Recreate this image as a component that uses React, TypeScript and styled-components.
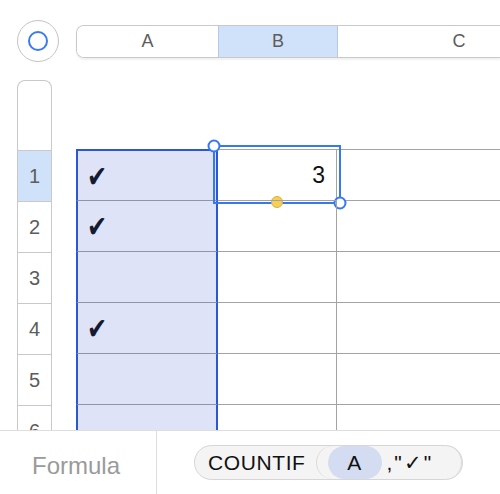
import React from "react"
import styled, { createGlobalStyle } from "styled-components"

const GlobalStyle = createGlobalStyle`
    html, body {
        margin: 0;
        padding: 0;
        background: #fff;
    }
    body {
        font-family: "Liberation Sans", Arial, sans-serif;
    }
`

const theme = {
    line: "#c9c9c9",
    grid: "#a3a3a3",
    gridSelected: "#8e94aa",
    headerText: "#5c5c5c",
    selectFill: "#dfe3f7",
    selectBorder: "#2b57d7",
    cellBorder: "#3479f2",
    headerSelected: "#d0e2f9",
}

const Page = styled.div`
    width: 500px;
    height: 494px;
    display: flex;
    flex-direction: column;
    overflow: hidden;
`

const Sheet = styled.div`
    height: 430px;
    flex-shrink: 0;
    overflow: hidden;
    display: flex;
    flex-direction: column;
`

const TopRow = styled.div`
    display: flex;
    align-items: center;
    padding: 20px 0 0 17px;
    gap: 17px;
`

const SelectAll = styled.div`
    width: 42px;
    height: 42px;
    box-sizing: border-box;
    border-radius: 50%;
    border: 1px solid #c4c4c4;
    display: flex;
    align-items: center;
    justify-content: center;
    flex-shrink: 0;
`

const SelectRing = styled.div`
    width: 16px;
    height: 16px;
    border-radius: 50%;
    border: 2px solid #3a7bf0;
`

const ColumnBar = styled.div`
    flex: 1;
    height: 33px;
    box-sizing: border-box;
    display: flex;
    border: 1px solid ${theme.line};
    border-right: none;
    border-radius: 8px 0 0 8px;
    overflow: hidden;
    box-shadow: 0 2px 2px rgba(0, 0, 0, 0.06);
`

const ColumnHead = styled.div<{ $w: number; $active?: boolean }>`
    width: ${(p) => p.$w}px;
    flex-shrink: 0;
    box-sizing: border-box;
    display: flex;
    align-items: center;
    justify-content: center;
    font-size: 18px;
    color: ${theme.headerText};
    background: ${(p) => (p.$active ? theme.headerSelected : "#fff")};
    border-left: ${(p) => (p.$active ? `1px solid #b7c9e2` : "none")};
    border-right: ${(p) => (p.$active ? `1px solid #b7c9e2` : "none")};
`

const Body = styled.div`
    display: flex;
    padding: 18px 0 0 17px;
`

const RowHeads = styled.div`
    width: 35px;
    box-sizing: border-box;
    flex-shrink: 0;
    border: 1px solid ${theme.line};
    border-bottom: none;
    border-radius: 8px 8px 0 0;
    display: flex;
    flex-direction: column;
`

const RowHeadSpacer = styled.div`
    height: 69px;
`

const RowHead = styled.div<{ $active?: boolean }>`
    height: 50px;
    flex-shrink: 0;
    border-top: 1px solid ${theme.line};
    display: flex;
    align-items: center;
    justify-content: center;
    font-size: 20px;
    color: ${theme.headerText};
    background: ${(p) => (p.$active ? theme.headerSelected : "#fff")};
`

const Grid = styled.div`
    flex: 1;
    margin-left: 24px;
    display: flex;
    flex-direction: column;
`

const GridSpacer = styled.div`
    height: 69px;
`

const GridRow = styled.div`
    display: flex;
    height: 51px;
    flex-shrink: 0;
`

const CellA = styled.div<{ $first?: boolean }>`
    width: 142px;
    flex-shrink: 0;
    box-sizing: border-box;
    background: ${theme.selectFill};
    border-left: 2px solid ${theme.selectBorder};
    border-right: 2px solid ${theme.selectBorder};
    border-top: ${(p) => (p.$first ? `2px solid ${theme.selectBorder}` : `1px solid ${theme.gridSelected}`)};
    display: flex;
    align-items: center;
    padding-left: 9px;
`

const Check = styled.span`
    display: inline-block;
    font-family: "DejaVu Sans", sans-serif;
    font-size: 24px;
    line-height: 1;
    color: #141a30;
    transform: scaleY(1.25);
    margin-top: 2px;
`

const CellB = styled.div`
    position: relative;
    width: 119px;
    flex-shrink: 0;
    border-top: 1px solid ${theme.grid};
    border-right: 1px solid ${theme.grid};
    display: flex;
    align-items: center;
    justify-content: flex-end;
    padding-right: 11px;
    box-sizing: border-box;
`

const CellC = styled.div`
    flex: 1;
    border-top: 1px solid ${theme.grid};
`

const Value = styled.span`
    font-size: 23px;
    color: #111;
`

const CellSelection = styled.div`
    position: absolute;
    left: -5px;
    right: -5px;
    top: -5px;
    bottom: -4px;
    border: 2px solid ${theme.cellBorder};
    pointer-events: none;
`

const Handle = styled.div<{ $x: string; $y: string }>`
    position: absolute;
    width: 9px;
    height: 9px;
    border-radius: 50%;
    background: #fff;
    border: 2px solid ${theme.cellBorder};
    left: ${(p) => p.$x};
    top: ${(p) => p.$y};
    transform: translate(-50%, -50%);
`

const FillDot = styled.div`
    position: absolute;
    width: 10px;
    height: 10px;
    border-radius: 50%;
    background: #f6cf57;
    border: 1px solid #d9b043;
    left: 50%;
    top: 100%;
    transform: translate(-50%, -50%);
`

const FormulaBar = styled.div`
    flex: 1;
    display: flex;
    border-top: 1px solid #dedede;
    background: #fff;
`

const FormulaLabel = styled.div`
    width: 157px;
    box-sizing: border-box;
    border-right: 1px solid #dedede;
    display: flex;
    align-items: center;
    justify-content: center;
    font-size: 24px;
    color: #9a9a9a;
    padding: 6px 4px 0 0;
`

const FormulaInput = styled.div`
    flex: 1;
    display: flex;
    align-items: center;
    padding: 0 0 0 37px;
`

const Pill = styled.div`
    height: 35px;
    box-sizing: border-box;
    display: flex;
    align-items: center;
    border: 1px solid #d6d6d6;
    border-radius: 18px;
    background: #f4f4f4;
    padding-left: 13px;
    font-size: 21px;
    letter-spacing: 0.6px;
    color: #111;
`

const InnerPill = styled.div`
    height: 33px;
    box-sizing: border-box;
    display: flex;
    align-items: center;
    margin-left: 10px;
    border-left: 1.5px solid #d9d9d9;
    border-right: 1.5px solid #d9d9d9;
    border-radius: 17px;
    padding-right: 28px;
`

const Token = styled.div`
    height: 33px;
    width: 54px;
    margin-left: 11px;
    border-radius: 17px;
    background: #d3dcf1;
    display: flex;
    align-items: center;
    justify-content: center;
`

const Literal = styled.span`
    margin-left: 5px;
    letter-spacing: 2px;
`

const rows = [
    { n: 1, check: true, value: "3" },
    { n: 2, check: true },
    { n: 3, check: false },
    { n: 4, check: true },
    { n: 5, check: false },
    { n: 6, check: false },
]

export default function App() {
    return (
        <Page>
            <GlobalStyle />
            <Sheet>
                <TopRow>
                    <SelectAll>
                        <SelectRing />
                    </SelectAll>
                    <ColumnBar>
                        <ColumnHead $w={141}>A</ColumnHead>
                        <ColumnHead $w={120} $active>B</ColumnHead>
                        <ColumnHead $w={242}>C</ColumnHead>
                    </ColumnBar>
                </TopRow>
                <Body>
                    <RowHeads>
                        <RowHeadSpacer />
                        {rows.map((r) => (
                            <RowHead key={r.n} $active={r.n === 1}>{r.n}</RowHead>
                        ))}
                    </RowHeads>
                    <Grid>
                        <GridSpacer />
                        {rows.map((r) => (
                            <GridRow key={r.n}>
                                <CellA $first={r.n === 1}>
                                    {r.check && <Check>✔</Check>}
                                </CellA>
                                <CellB>
                                    {r.value && <Value>{r.value}</Value>}
                                    {r.n === 1 && (
                                        <CellSelection>
                                            <Handle $x="-1px" $y="-1px" />
                                            <Handle $x="calc(100% + 1px)" $y="calc(100% + 1px)" />
                                            <FillDot />
                                        </CellSelection>
                                    )}
                                </CellB>
                                <CellC />
                            </GridRow>
                        ))}
                    </Grid>
                </Body>
            </Sheet>
            <FormulaBar>
                <FormulaLabel>Formula</FormulaLabel>
                <FormulaInput>
                    <Pill>
                        COUNTIF
                        <InnerPill>
                            <Token>A</Token>
                            <Literal>,"✓"</Literal>
                        </InnerPill>
                    </Pill>
                </FormulaInput>
            </FormulaBar>
        </Page>
    )
}
